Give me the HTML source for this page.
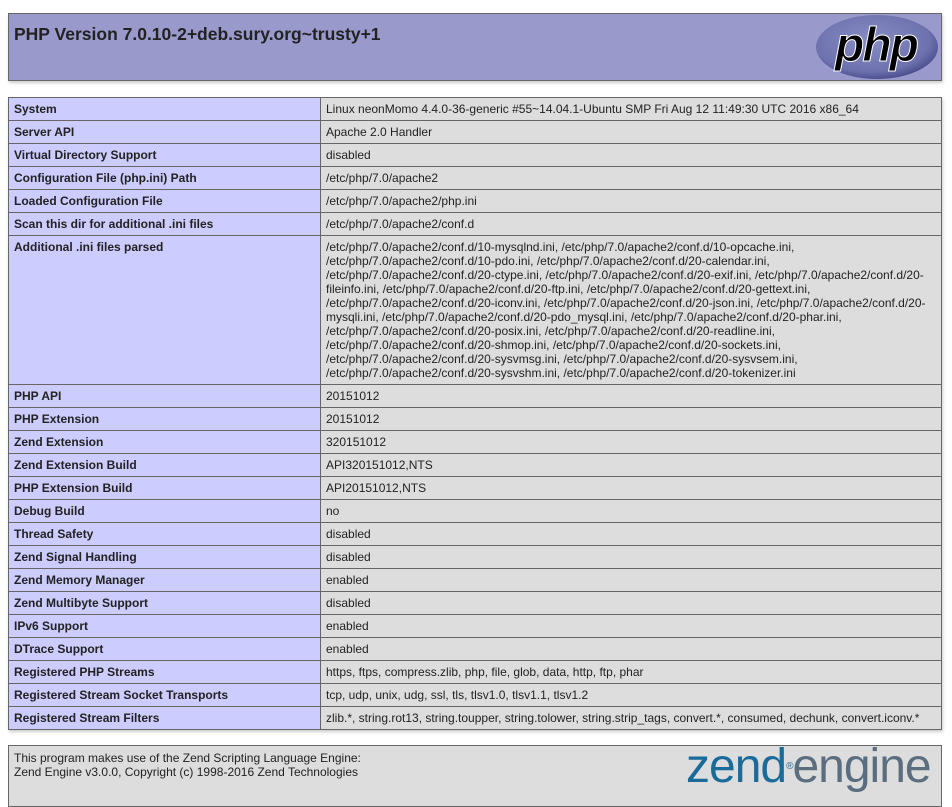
<!DOCTYPE html>
<html><head><meta charset="utf-8"><style>
body{margin:0;background:#fff;font-family:"Liberation Sans",Arial,sans-serif;color:#222;}
.hdr{position:absolute;left:8px;top:13px;width:932px;height:66px;background:#99c;border:1px solid #666;box-shadow:1px 2px 3px #ccc;}
.hdr h1{position:absolute;left:5px;top:10px;margin:0;font-size:17.5px;font-weight:bold;color:#222;}
.hdr svg{position:absolute;left:797px;top:0px;}
table{position:absolute;left:8px;border-collapse:collapse;width:934px;box-shadow:1px 2px 3px #ccc;}
td{border:1px solid #666;font-size:12px;line-height:14px;padding:4px 5px;vertical-align:baseline;}
td.e{background:#ccf;width:301px;font-weight:bold;}
td.v{background:#ddd;}
.ftr{position:absolute;left:8px;top:745px;width:932px;height:60px;background:#ddd;border:1px solid #666;font-size:12px;line-height:14px;overflow:hidden;}
</style></head><body>
<div class="hdr"><h1>PHP Version 7.0.10-2+deb.sury.org~trusty+1</h1>
<svg width="134" height="66" viewBox="0 0 134 66">
<defs><radialGradient id="g" cx="0.45" cy="0.4" r="0.6"><stop offset="0" stop-color="#888dc4"/><stop offset="0.8" stop-color="#6d72ae"/><stop offset="1" stop-color="#4d5190"/></radialGradient></defs>
<ellipse cx="71" cy="33" rx="61" ry="32" fill="url(#g)"/>
<text x="70" y="47" text-anchor="middle" font-family="Liberation Sans,sans-serif" font-weight="bold" font-style="italic" font-size="48" fill="#000" stroke="#fff" stroke-width="1" letter-spacing="-2">php</text>
</svg></div>
<table style="top:97px">
<tr><td class="e">System</td><td class="v">Linux neonMomo 4.4.0-36-generic #55~14.04.1-Ubuntu SMP Fri Aug 12 11:49:30 UTC 2016 x86_64</td></tr>
<tr><td class="e">Server API</td><td class="v">Apache 2.0 Handler</td></tr>
<tr><td class="e">Virtual Directory Support</td><td class="v">disabled</td></tr>
<tr><td class="e">Configuration File (php.ini) Path</td><td class="v">/etc/php/7.0/apache2</td></tr>
<tr><td class="e">Loaded Configuration File</td><td class="v">/etc/php/7.0/apache2/php.ini</td></tr>
<tr><td class="e">Scan this dir for additional .ini files</td><td class="v">/etc/php/7.0/apache2/conf.d</td></tr>
<tr><td class="e">Additional .ini files parsed</td><td class="v">/etc/php/7.0/apache2/conf.d/10-mysqlnd.ini, /etc/php/7.0/apache2/conf.d/10-opcache.ini,<br>/etc/php/7.0/apache2/conf.d/10-pdo.ini, /etc/php/7.0/apache2/conf.d/20-calendar.ini,<br>/etc/php/7.0/apache2/conf.d/20-ctype.ini, /etc/php/7.0/apache2/conf.d/20-exif.ini, /etc/php/7.0/apache2/conf.d/20-<br>fileinfo.ini, /etc/php/7.0/apache2/conf.d/20-ftp.ini, /etc/php/7.0/apache2/conf.d/20-gettext.ini,<br>/etc/php/7.0/apache2/conf.d/20-iconv.ini, /etc/php/7.0/apache2/conf.d/20-json.ini, /etc/php/7.0/apache2/conf.d/20-<br>mysqli.ini, /etc/php/7.0/apache2/conf.d/20-pdo_mysql.ini, /etc/php/7.0/apache2/conf.d/20-phar.ini,<br>/etc/php/7.0/apache2/conf.d/20-posix.ini, /etc/php/7.0/apache2/conf.d/20-readline.ini,<br>/etc/php/7.0/apache2/conf.d/20-shmop.ini, /etc/php/7.0/apache2/conf.d/20-sockets.ini,<br>/etc/php/7.0/apache2/conf.d/20-sysvmsg.ini, /etc/php/7.0/apache2/conf.d/20-sysvsem.ini,<br>/etc/php/7.0/apache2/conf.d/20-sysvshm.ini, /etc/php/7.0/apache2/conf.d/20-tokenizer.ini</td></tr>
<tr><td class="e">PHP API</td><td class="v">20151012</td></tr>
<tr><td class="e">PHP Extension</td><td class="v">20151012</td></tr>
<tr><td class="e">Zend Extension</td><td class="v">320151012</td></tr>
<tr><td class="e">Zend Extension Build</td><td class="v">API320151012,NTS</td></tr>
<tr><td class="e">PHP Extension Build</td><td class="v">API20151012,NTS</td></tr>
<tr><td class="e">Debug Build</td><td class="v">no</td></tr>
<tr><td class="e">Thread Safety</td><td class="v">disabled</td></tr>
<tr><td class="e">Zend Signal Handling</td><td class="v">disabled</td></tr>
<tr><td class="e">Zend Memory Manager</td><td class="v">enabled</td></tr>
<tr><td class="e">Zend Multibyte Support</td><td class="v">disabled</td></tr>
<tr><td class="e">IPv6 Support</td><td class="v">enabled</td></tr>
<tr><td class="e">DTrace Support</td><td class="v">enabled</td></tr>
<tr><td class="e">Registered PHP Streams</td><td class="v">https, ftps, compress.zlib, php, file, glob, data, http, ftp, phar</td></tr>
<tr><td class="e">Registered Stream Socket Transports</td><td class="v">tcp, udp, unix, udg, ssl, tls, tlsv1.0, tlsv1.1, tlsv1.2</td></tr>
<tr><td class="e">Registered Stream Filters</td><td class="v">zlib.*, string.rot13, string.toupper, string.tolower, string.strip_tags, convert.*, consumed, dechunk, convert.iconv.*</td></tr>
</table>
<div class="ftr"><div style="position:absolute;left:5px;top:5px;">This program makes use of the Zend Scripting Language Engine:<br>Zend Engine v3.0.0, Copyright (c) 1998-2016 Zend Technologies</div>
<div style="position:absolute;left:677px;top:-3px;font-size:48px;line-height:48px;color:#1a6a9a;letter-spacing:-1px;white-space:nowrap;">zend<span style="font-size:10px;vertical-align:top;">®</span><span style="color:#5b6e80">engine</span></div></div>
</body></html>
